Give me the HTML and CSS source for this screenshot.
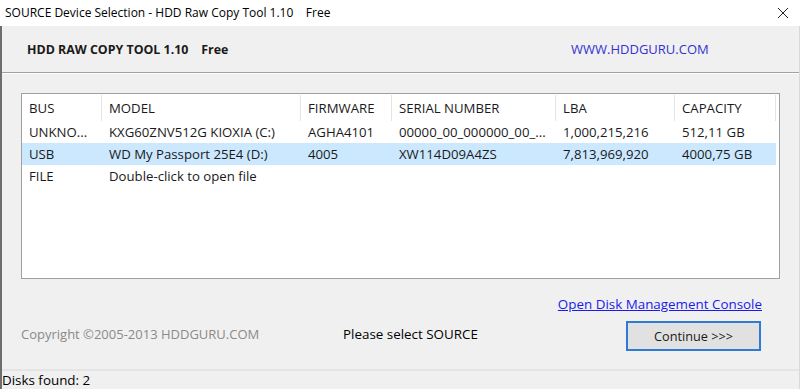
FILE: index.html
```html
<!DOCTYPE html>
<html>
<head>
<meta charset="utf-8">
<link rel="stylesheet" href="styles.css">
</head>
<body>
<div class="window">
  <div class="titlebar">
    <span class="title">SOURCE Device Selection - HDD Raw Copy Tool 1.10&nbsp;&nbsp;&nbsp;&nbsp;Free</span>
    <svg class="close" width="12" height="12" viewBox="0 0 12 12"><path d="M1 1 L11 11 M11 1 L1 11" stroke="#222" stroke-width="1" fill="none"/></svg>
  </div>
  <div class="content">
    <div class="banner">
      <span class="product">HDD RAW COPY TOOL 1.10&nbsp;&nbsp;&nbsp;&nbsp;Free</span>
      <span class="site">WWW.HDDGURU.COM</span>
    </div>
    <div class="main">
      <div class="listbox">
        <div class="grid">
          <div class="hd">BUS</div><div class="hd">MODEL</div><div class="hd">FIRMWARE</div><div class="hd">SERIAL NUMBER</div><div class="hd">LBA</div><div class="hd">CAPACITY</div>
          <div class="cell">UNKNO...</div><div class="cell">KXG60ZNV512G KIOXIA (C:)</div><div class="cell">AGHA4101</div><div class="cell">00000_00_000000_00_...</div><div class="cell">1,000,215,216</div><div class="cell">512,11 GB</div>
          <div class="cell sel">USB</div><div class="cell sel">WD My Passport 25E4 (D:)</div><div class="cell sel">4005</div><div class="cell sel">XW114D09A4ZS</div><div class="cell sel">7,813,969,920</div><div class="cell sel">4000,75 GB</div>
          <div class="cell">FILE</div><div class="cell">Double-click to open file</div><div class="cell"></div><div class="cell"></div><div class="cell"></div><div class="cell"></div>
        </div>
      </div>
      <div class="footer">
        <span class="copyright">Copyright ©2005-2013 HDDGURU.COM</span>
        <span class="prompt">Please select SOURCE</span>
        <div class="actions">
          <span class="link">Open Disk Management Console</span>
          <div class="button">Continue &gt;&gt;&gt;</div>
        </div>
      </div>
    </div>
    <div class="status">Disks found: 2</div>
  </div>
</div>
</body>
</html>
```
FILE: styles.css
```css
html, body {
  margin: 0;
  padding: 0;
}
body {
  width: 800px;
  height: 389px;
  overflow: hidden;
  font-family: "Open Sans", "Noto Sans", sans-serif;
  font-size: 12px;
  color: #000;
  background: #f0f0f0;
}
.window {
  display: flex;
  flex-direction: column;
  height: 389px;
}
.titlebar {
  height: 26px;
  background: #fff;
  display: flex;
  align-items: center;
  padding-left: 5px;
  box-sizing: border-box;
}
.title {
  flex: 1;
  line-height: 16px;
  white-space: pre;
}
.close {
  margin-right: 11px;
}
.content {
  flex: 1;
  display: flex;
  flex-direction: column;
  border-left: 2px solid #6e6e6e;
  border-right: 1px solid #d9d9d9;
  background: #f0f0f0;
}
.banner {
  height: 46px;
  display: flex;
  align-items: center;
  padding-left: 25px;
  border-bottom: 1px solid #a0a0a0;
  box-shadow: 0 1px 0 #fff;
}
.product {
  font-weight: bold;
  font-size: 12.4px;
  color: #1a1a1a;
  width: 544px;
  white-space: pre;
}
.site {
  font-size: 13px;
  color: #3232d2;
}
.main {
  flex: 1;
  display: flex;
  flex-direction: column;
  padding: 20px 19px 0 19px;
}
.listbox {
  height: 186px;
  box-sizing: border-box;
  border: 1px solid #a0a0a0;
  background: #fff;
  padding-top: 1px;
}
.grid {
  display: grid;
  grid-template-columns: 80px 199px 91px 164px 119px 101px;
  grid-template-rows: 26px;
  grid-auto-rows: 22px;
  font-size: 13.2px;
}
.hd {
  line-height: 26px;
  padding-left: 7px;
  border-right: 1px solid #e5e5e5;
  color: #1a1a1a;
}
.cell {
  line-height: 22px;
  padding-left: 7px;
  white-space: nowrap;
  overflow: hidden;
  color: #1a1a1a;
}
.sel {
  background: #cce8ff;
}
.footer {
  flex: 1;
  display: flex;
  align-items: flex-end;
}
.copyright {
  width: 322px;
  color: #8a8a8a;
  font-size: 13px;
  line-height: 18px;
  margin-bottom: 26px;
}
.prompt {
  flex: 1;
  font-size: 13.4px;
  line-height: 18px;
  margin-bottom: 26px;
}
.actions {
  display: flex;
  flex-direction: column;
  align-items: flex-end;
  padding-right: 18px;
  padding-bottom: 18px;
}
.link {
  color: #1a1aee;
  font-size: 13.4px;
  text-decoration: underline;
  line-height: 18px;
}
.button {
  margin-top: 8px;
  margin-right: 1px;
  width: 135px;
  height: 30px;
  box-sizing: border-box;
  border: 2px solid #2f7bd3;
  background: #e1e1e1;
  display: flex;
  align-items: center;
  justify-content: center;
  font-size: 12.7px;
  color: #1a1a1a;
}
.status {
  height: 18px;
  border-top: 2px solid #e4e4e4;
  line-height: 18px;
  font-size: 13.4px;
}
```
